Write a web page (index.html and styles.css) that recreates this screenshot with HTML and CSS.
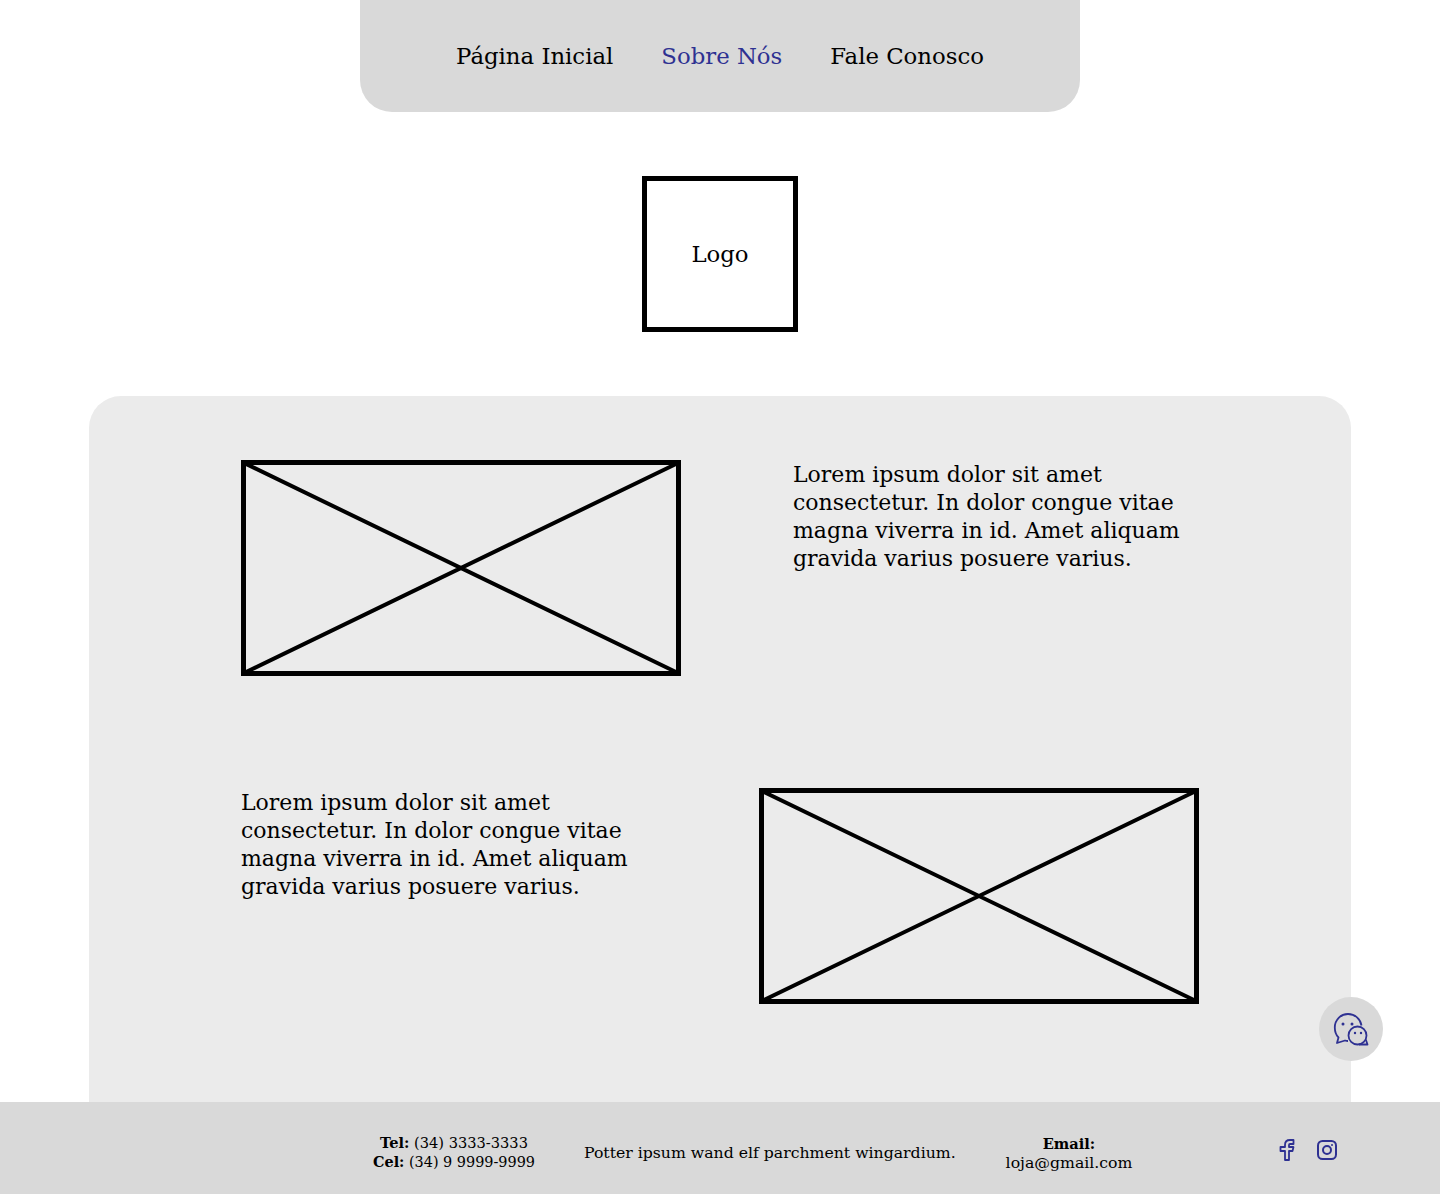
FILE: index.html
```html
<!DOCTYPE html>
<html lang="pt-BR">
<head>
    <meta charset="UTF-8">
    <meta name="viewport" content="width=device-width, initial-scale=1.0">
    <title>Sobre Nós</title>
    <link rel="stylesheet" href="styles.css">
</head>
<body>
    <nav class="topnav">
        <a href="#">Página Inicial</a>
        <a href="#" class="active">Sobre Nós</a>
        <a href="#">Fale Conosco</a>
    </nav>

    <div class="logo">Logo</div>

    <main class="panel">
        <section class="row">
            <svg class="placeholder" viewBox="0 0 440 216" preserveAspectRatio="none">
                <rect x="2.5" y="2.5" width="435" height="211" fill="none" stroke="#000" stroke-width="5"/>
                <path d="M3 3L437 213M437 3L3 213" fill="none" stroke="#000" stroke-width="4"/>
            </svg>
            <p class="copy">Lorem ipsum dolor sit amet consectetur. In dolor congue vitae magna viverra in id. Amet aliquam gravida varius posuere varius.</p>
        </section>
        <section class="row">
            <p class="copy">Lorem ipsum dolor sit amet consectetur. In dolor congue vitae magna viverra in id. Amet aliquam gravida varius posuere varius.</p>
            <svg class="placeholder" viewBox="0 0 440 216" preserveAspectRatio="none">
                <rect x="2.5" y="2.5" width="435" height="211" fill="none" stroke="#000" stroke-width="5"/>
                <path d="M3 3L437 213M437 3L3 213" fill="none" stroke="#000" stroke-width="4"/>
            </svg>
        </section>
    </main>

    <!-- Chat button -->
    <button class="chat" type="button" aria-label="Chat">
        <svg width="36" height="34" viewBox="0 0 36 34" fill="none" stroke="#2e3192" stroke-width="1.800" stroke-linejoin="round">
            <path d="M15 29C14 29 13 28.800 12 28.500L4 31L5.500 25.500C3 23 1.800 19.500 1.800 15.500C1.800 8 7.800 2 15 2C22 2 27.500 7 28.500 13.500"/>
            <circle cx="24.500" cy="23.500" r="9"/>
            <path d="M26 32.500L34.500 32.500L32.800 27.500"/>
            <circle cx="10" cy="12" r="1.500" fill="#2e3192" stroke="none"/>
            <circle cx="19" cy="12" r="1.500" fill="#2e3192" stroke="none"/>
            <circle cx="22" cy="21" r="1.200" fill="#2e3192" stroke="none"/>
            <circle cx="28" cy="21" r="1.200" fill="#2e3192" stroke="none"/>
        </svg>
    </button>

    <footer class="footer">
        <div class="contact phones">
            <div><b>Tel:</b> (34) 3333-3333</div>
            <div class="cell"><b>Cel:</b> (34) 9 9999-9999</div>
        </div>
        <p class="tagline">Potter ipsum wand elf parchment wingardium.</p>
        <div class="contact email">
            <div><b>Email:</b></div>
            <div class="address">loja@gmail.com</div>
        </div>
        <div class="social">
            <svg width="16" height="22" viewBox="0 0 16 22" fill="none" stroke="#2e3192" stroke-width="1.800" stroke-linejoin="round">
                <path d="M14.500 1H11C8 1 6 3 6 6V8H1.500V12H6V21H10V12H13.500L14.500 8H10V6C10 5.400 10.400 5 11 5H14.500Z"/>
            </svg>
            <svg width="20" height="20" viewBox="0 0 20 20" fill="none" stroke="#2e3192" stroke-width="2">
                <rect x="1" y="1" width="18" height="18" rx="4.500"/>
                <circle cx="10" cy="10" r="4"/>
                <circle cx="15" cy="5" r="1" fill="#2e3192" stroke="none"/>
            </svg>
        </div>
    </footer>
</body>
</html>
```

FILE: styles.css
```css
* { box-sizing: border-box; }

body {
    margin: 0;
    height: 1194px;
    overflow: hidden;
    position: relative;
    background: #fff;
    color: #000;
    font-family: "DejaVu Serif", "Liberation Serif", serif;
}

.topnav {
    width: 720px;
    height: 112px;
    margin: 0 auto;
    display: flex;
    justify-content: center;
    align-items: center;
    gap: 48px;
    background: #d9d9d9;
    border-radius: 0 0 32px 32px;
    font-size: 22.800px;
}

.topnav a { color: #000; text-decoration: none; }
.topnav a.active { color: #2e3192; }

.logo {
    width: 156px;
    height: 156px;
    margin: 64px auto;
    display: flex;
    justify-content: center;
    align-items: center;
    border: 5px solid #000;
    font-size: 22.800px;
}

.panel {
    width: 1262px;
    height: 706px;
    margin: 0 auto;
    padding: 64px 152px 0;
    display: flex;
    flex-direction: column;
    gap: 112px;
    background: #ebebeb;
    border-radius: 32px 32px 0 0;
}

.row {
    display: flex;
    justify-content: space-between;
    align-items: flex-start;
}

.placeholder {
    display: block;
    width: 440px;
    height: 216px;
}

.copy {
    width: 406px;
    margin: 0;
    padding-top: 1px;
    font-size: 22px;
    line-height: 28px;
}

.chat {
    position: absolute;
    left: 1319px;
    top: 997px;
    width: 64px;
    height: 64px;
    padding: 0;
    display: flex;
    justify-content: center;
    align-items: center;
    border: 0;
    border-radius: 50%;
    background: #d9d9d9;
}

.footer {
    height: 92px;
    display: flex;
    align-items: center;
    padding: 9px 0 0 373px;
    background: #d9d9d9;
    font-size: 14.600px;
    line-height: 19px;
}

.contact { text-align: center; white-space: nowrap; }
.phones { width: 162px; }
.cell { font-size: 14.400px; }
.tagline { width: 373px; margin: 0 0 0 49px; white-space: nowrap; font-size: 15.700px; }
.email { width: 128px; margin-left: 48px; }
.address { font-size: 15.700px; }

.social {
    display: flex;
    align-items: center;
    gap: 22px;
    margin-left: 146px;
    margin-top: -5px;
}
```
